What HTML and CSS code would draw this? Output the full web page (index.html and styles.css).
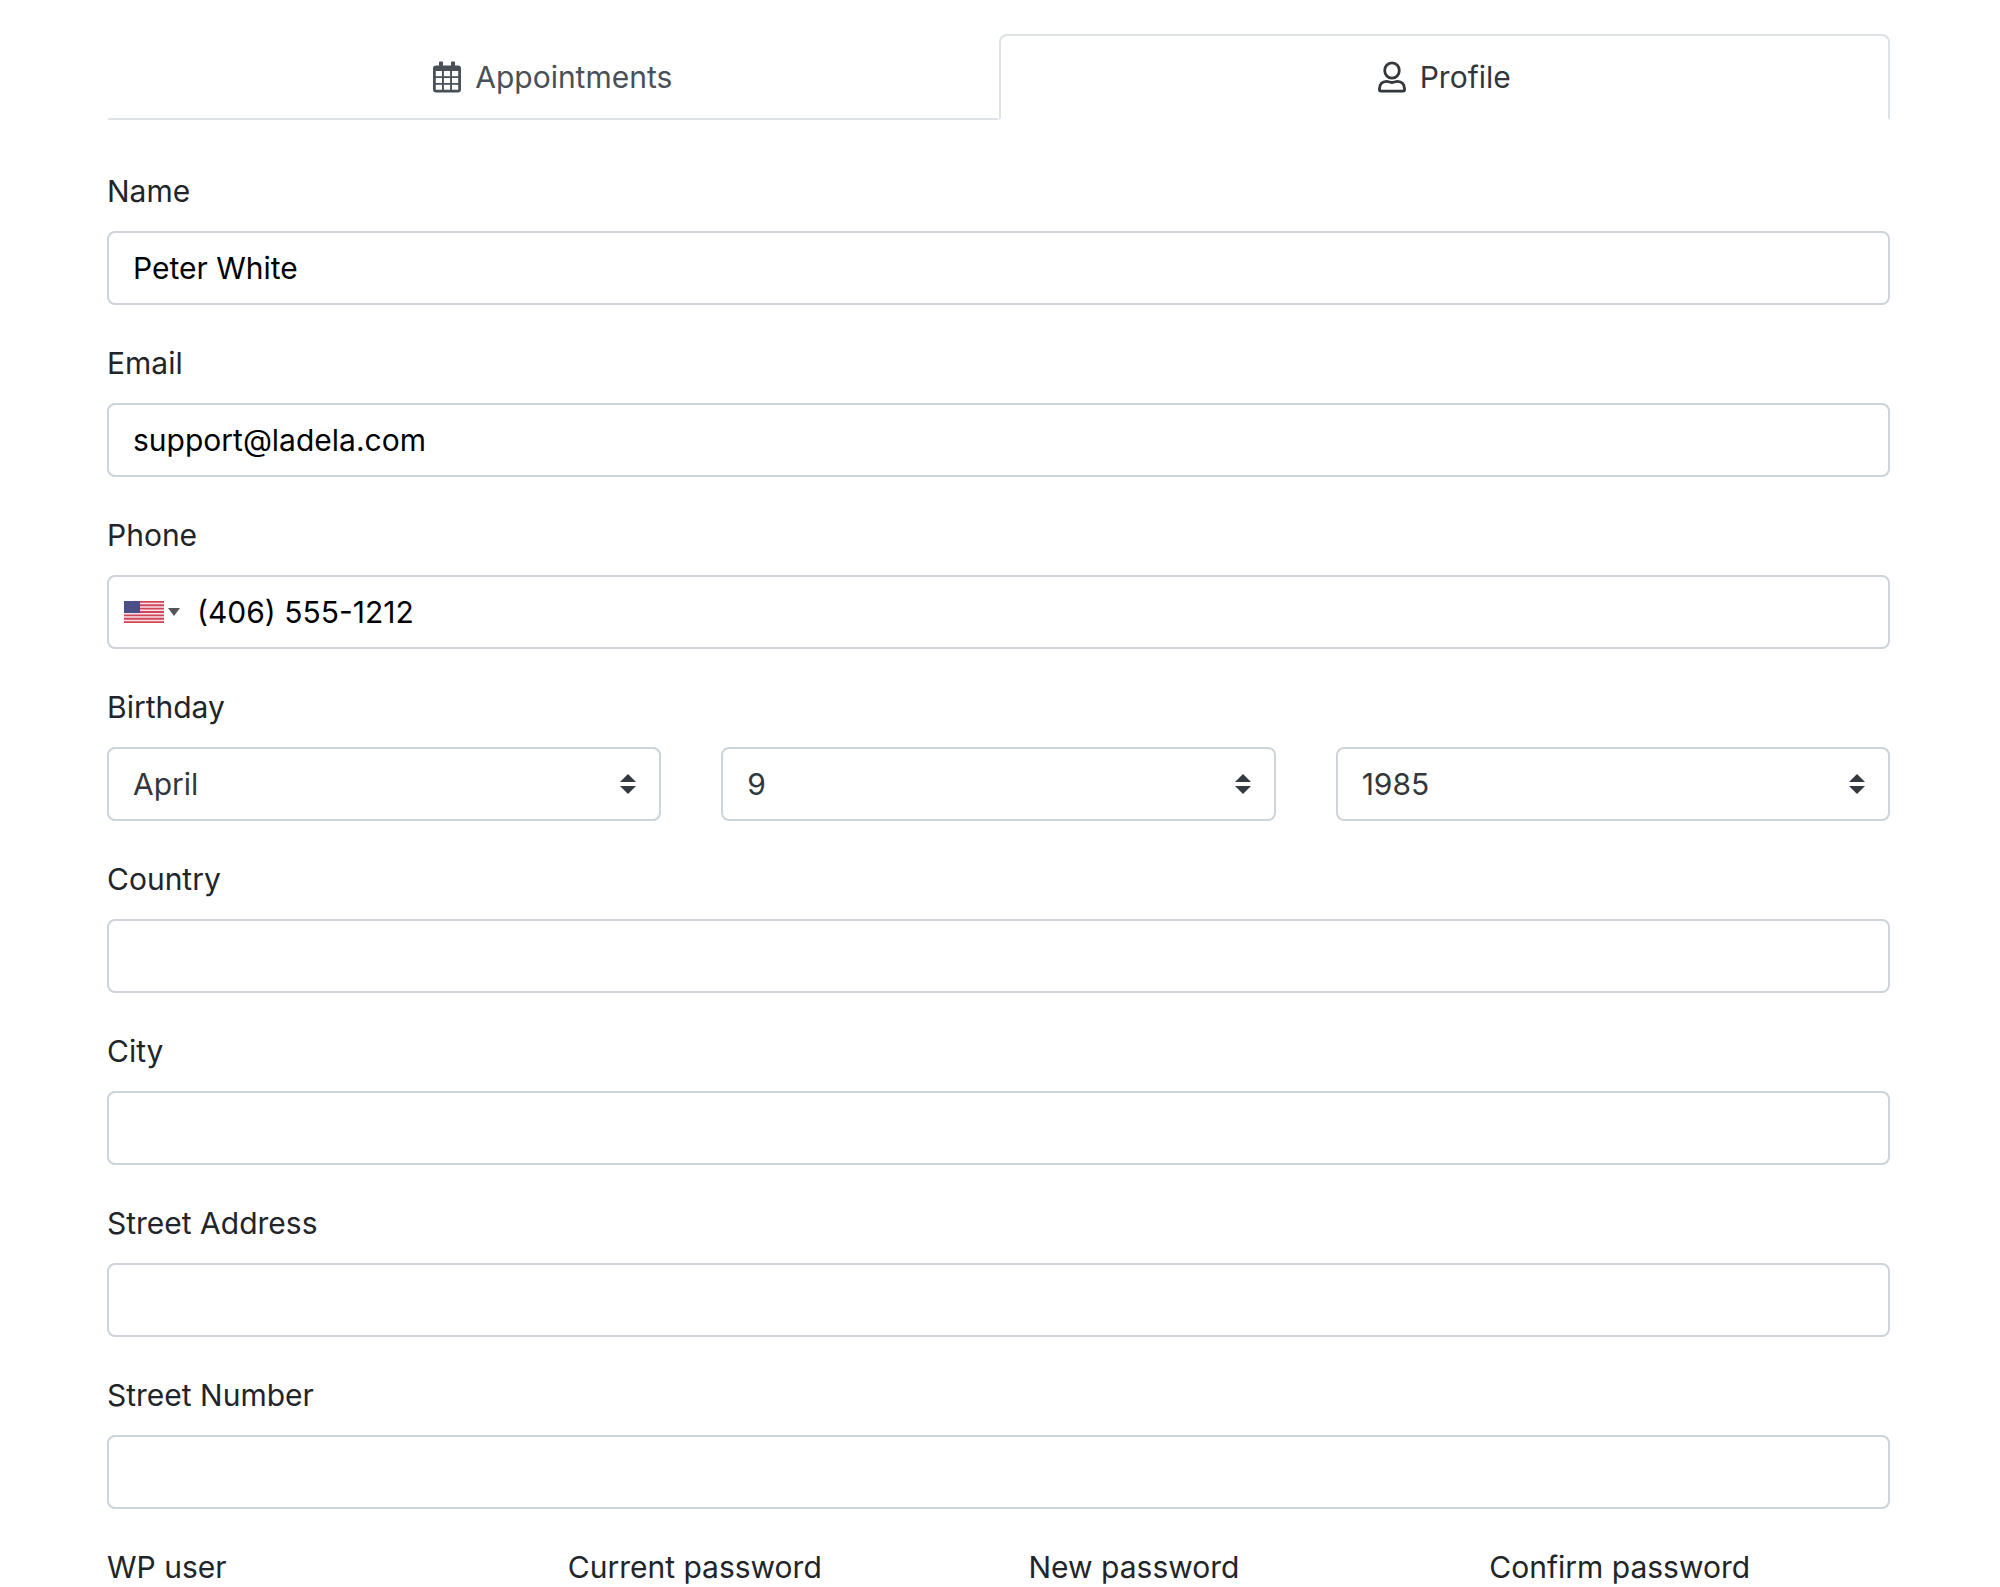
FILE: index.html
```html
<!DOCTYPE html>
<html lang="en">
<head>
  <meta charset="utf-8">
  <title>Profile</title>
  <meta name="viewport" content="width=device-width, initial-scale=1">
  <link rel="stylesheet" href="styles.css">
</head>
<body>
  <nav class="tabs">
    <a class="tab" href="#appointments">
      <svg class="icon" width="28" height="32" viewBox="0 0 28 32">
        <path fill="currentColor" fill-rule="evenodd" d="M6 1.2Q6 .5 6.700 .5H9.300Q10 .5 10 1.200V4.500H18V1.200Q18 .5 18.700 .5H21.300Q22 .5 22 1.200V4.500H25Q28 4.500 28 7.500V28.500Q28 31.500 25 31.500H3Q0 31.500 0 28.500V7.500Q0 4.500 3 4.500H6ZM2.800 10V15.300H9V10ZM10.900 10V15.300H17.100V10ZM19 10V15.300H25.200V10ZM2.800 17.100V22H9V17.100ZM10.900 17.100V22H17.100V17.100ZM19 17.100V22H25.200V17.100ZM2.800 23.800V28.700H9V23.800ZM10.900 23.800V28.700H17.100V23.800ZM19 23.800V28.700H25.200V23.800Z"/>
      </svg>
      Appointments
    </a>
    <a class="tab active" href="#profile">
      <svg class="icon" width="28" height="32" viewBox="0 0 28 32">
        <g fill="none" stroke="currentColor" stroke-width="2.800">
          <ellipse cx="14" cy="9.500" rx="7.300" ry="7.700"/>
          <path d="M8.500 20.300C10.500 20.300 11 21.500 14 21.500S17.500 20.300 19.500 20.300C24 20.300 26.600 23.500 26.600 28.300Q26.600 30.100 25 30.100H3Q1.400 30.100 1.400 28.300C1.400 23.500 4 20.300 8.500 20.300Z"/>
        </g>
      </svg>
      Profile
    </a>
  </nav>

  <form>
    <div class="field">
      <label for="name">Name</label>
      <input id="name" type="text" value="Peter White">
    </div>
    <div class="field">
      <label for="email">Email</label>
      <input id="email" type="email" value="support@ladela.com">
    </div>
    <div class="field">
      <label for="phone">Phone</label>
      <div class="phone">
        <input id="phone" type="tel" value="(406) 555-1212">
        <button class="country-code" type="button" aria-label="United States">
          <svg width="40" height="22" viewBox="0 0 40 22">
            <rect width="40" height="22" fill="#f8e4e8"/>
            <path stroke="#d0475c" stroke-width="1.900" d="M0 .9H40M0 4.300H40M0 7.600H40M0 11H40M0 14.400H40M0 17.700H40M0 21.100H40"/>
            <rect width="16" height="12" fill="#4c4f86"/>
          </svg>
          <svg width="12" height="8" viewBox="0 0 12 8">
            <path fill="#555" d="M0 0H12L6 8Z"/>
          </svg>
        </button>
      </div>
    </div>
    <div class="field">
      <label for="month">Birthday</label>
      <div class="row">
        <div class="select">
          <select id="month"><option>April</option></select>
          <svg width="16" height="20" viewBox="0 0 16 20"><path d="M0 8L8 0L16 8ZM0 12H16L8 20Z"/></svg>
        </div>
        <div class="select">
          <select aria-label="Day"><option>9</option></select>
          <svg width="16" height="20" viewBox="0 0 16 20"><path d="M0 8L8 0L16 8ZM0 12H16L8 20Z"/></svg>
        </div>
        <div class="select">
          <select aria-label="Year"><option>1985</option></select>
          <svg width="16" height="20" viewBox="0 0 16 20"><path d="M0 8L8 0L16 8ZM0 12H16L8 20Z"/></svg>
        </div>
      </div>
    </div>
    <div class="field">
      <label for="country">Country</label>
      <input id="country" type="text">
    </div>
    <div class="field">
      <label for="city">City</label>
      <input id="city" type="text">
    </div>
    <div class="field">
      <label for="street">Street Address</label>
      <input id="street" type="text">
    </div>
    <div class="field">
      <label for="number">Street Number</label>
      <input id="number" type="text">
    </div>
    <div class="row">
      <div class="field">
        <label for="user">WP user</label>
        <input id="user" type="text">
      </div>
      <div class="field">
        <label for="current">Current password</label>
        <input id="current" type="password">
      </div>
      <div class="field">
        <label for="new">New password</label>
        <input id="new" type="password">
      </div>
      <div class="field">
        <label for="confirm">Confirm password</label>
        <input id="confirm" type="password">
      </div>
    </div>
  </form>
</body>
</html>
```

FILE: styles.css
```css
*, *:before, *:after {
  box-sizing: border-box;
}
html, body {
  height: 100%;
  overflow: hidden;
}
body {
  margin: 0;
  padding: 34px 110px 0 107px;
  background: #fff;
  color: #212529;
  font-family: Inter, "Liberation Sans", sans-serif;
  font-size: 30px;
  line-height: 48px;
}
.tabs {
  display: flex;
  margin-bottom: 47px;
}
.tab {
  flex: 1;
  display: flex;
  align-items: center;
  justify-content: center;
  gap: 14px;
  height: 86px;
  border: 2px solid transparent;
  border-bottom-color: #dee2e6;
  color: #495057;
  text-decoration: none;
}
.tab.active {
  border-color: #dee2e6;
  border-bottom-color: transparent;
  border-radius: 8px 8px 0 0;
  color: #32373c;
}
.field {
  margin-bottom: 34px;
}
label {
  display: block;
  margin-bottom: 16px;
}
input, select {
  display: block;
  width: 100%;
  height: 74px;
  padding: 0 24px;
  border: 2px solid #ced4da;
  border-radius: 8px;
  background: #fff;
  color: #000;
  font: inherit;
}
select {
  appearance: none;
  -webkit-appearance: none;
  color: #32373c;
}
.row {
  display: flex;
  gap: 60px;
}
.row > div {
  flex: 1;
  min-width: 0;
}
.select, .phone {
  position: relative;
}
.select svg {
  position: absolute;
  top: 27px;
  right: 25px;
  fill: #343a40;
  pointer-events: none;
}
.phone input {
  padding-left: 88px;
}
.country-code {
  position: absolute;
  top: 0;
  left: 0;
  display: flex;
  align-items: center;
  gap: 4px;
  height: 100%;
  padding: 0 0 0 17px;
  border: none;
  background: transparent;
}
```
